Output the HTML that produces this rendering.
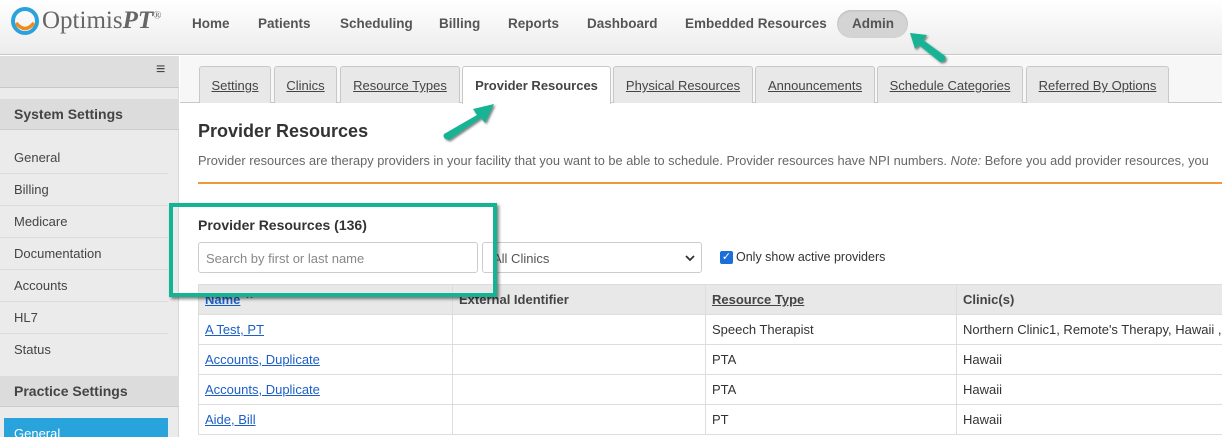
<!DOCTYPE html>
<html><head><meta charset="utf-8"><style>
*{box-sizing:border-box;margin:0;padding:0}
html,body{width:1222px;height:437px;overflow:hidden}
body{font-family:"Liberation Sans",Arial,sans-serif;background:#fff;position:relative;color:#333}
.abs{position:absolute}
.hdr{left:0;top:0;width:1222px;height:55px;background:linear-gradient(#fff,#ececec);border-bottom:1px solid #c8c8c8}
.nav{top:16px;font-size:13.5px;font-weight:bold;color:#555}
.side{left:0;top:56px;width:179px;height:381px;background:#ebebeb;border-right:1px solid #d8d8d8}
.sitem{left:0;width:168px;height:32px;border-bottom:1px solid #dcdcdc;font-size:13px;color:#444;padding:8px 14px}
.shead{left:0;width:179px;height:31px;background:#dcdcdc;font-size:14px;font-weight:bold;color:#444;padding:7px 14px;border-bottom:1px solid #ccc}
.tab{top:66px;height:37px;background:#e8e8e8;border:1px solid #c8c8c8;border-bottom:none;border-radius:3px 3px 0 0;font-size:13px;color:#444;text-decoration:underline;text-align:center;padding-top:11px}
td,th{border:1px solid #ddd;height:30px;font-size:13px;padding:0 6px;text-align:left;white-space:nowrap;overflow:hidden}
th{background:#e8e8e8;color:#444}
a{color:#1a5fc8;text-decoration:underline}
</style></head><body>
<div class="abs hdr"></div>
<svg class="abs" style="left:9px;top:6px" width="34" height="30" viewBox="0 0 34 30"><circle cx="16" cy="15" r="12" fill="none" stroke="#2aa3dc" stroke-width="4"/><path d="M7 17 Q16 28 25 17" fill="none" stroke="#f18a1c" stroke-width="3.5"/></svg>
<div class="abs" style="left:42px;top:7px;font-family:'Liberation Serif',serif;font-size:25px;color:#666">Optimis<i style="font-weight:bold">PT</i><sup style="font-size:11px">®</sup></div>
<div class="abs nav" style="left:192px">Home</div>
<div class="abs nav" style="left:258px">Patients</div>
<div class="abs nav" style="left:340px">Scheduling</div>
<div class="abs nav" style="left:439px">Billing</div>
<div class="abs nav" style="left:508px">Reports</div>
<div class="abs nav" style="left:587px">Dashboard</div>
<div class="abs nav" style="left:685px">Embedded Resources</div>
<div class="abs" style="left:837px;top:10px;width:71px;height:28px;border-radius:14px;background:#d4d4d4;box-shadow:inset 0 1px 2px #bbb"></div>
<div class="abs nav" style="left:852px">Admin</div>
<div class="abs side"></div>
<div class="abs" style="left:0;top:56px;width:179px;height:32px;background:#dedede;border-bottom:1px solid #c8c8c8"></div>
<div class="abs" style="left:156px;top:61px;font-size:16px;color:#444">≡</div>
<div class="abs shead" style="top:99px">System Settings</div>
<div class="abs sitem" style="top:142px">General</div>
<div class="abs sitem" style="top:174px">Billing</div>
<div class="abs sitem" style="top:206px">Medicare</div>
<div class="abs sitem" style="top:238px">Documentation</div>
<div class="abs sitem" style="top:270px">Accounts</div>
<div class="abs sitem" style="top:302px">HL7</div>
<div class="abs sitem" style="top:334px;border:none">Status</div>
<div class="abs shead" style="top:376px">Practice Settings</div>
<div class="abs" style="left:4px;top:418px;width:164px;height:25px;background:#29a3dc;color:#fff;font-size:13px;padding:8px 10px">General</div>
<div class="abs" style="left:180px;top:56px;width:1042px;height:47px;background:#f7f7f7;border-bottom:1px solid #c8c8c8"></div>
<div class="abs tab" style="left:199px;width:72px">Settings</div>
<div class="abs tab" style="left:274px;width:63px">Clinics</div>
<div class="abs tab" style="left:340px;width:120px">Resource Types</div>
<div class="abs tab" style="left:462px;width:149px;background:#fff;height:38px;text-decoration:none;font-weight:bold;color:#444">Provider Resources</div>
<div class="abs tab" style="left:613px;width:140px">Physical Resources</div>
<div class="abs tab" style="left:755px;width:120px">Announcements</div>
<div class="abs tab" style="left:877px;width:146px">Schedule Categories</div>
<div class="abs tab" style="left:1026px;width:143px">Referred By Options</div>
<div class="abs" style="left:198px;top:121px;font-size:18px;font-weight:bold;color:#333">Provider Resources</div>
<div class="abs" style="left:198px;top:153px;font-size:12.8px;color:#666;white-space:nowrap">Provider resources are therapy providers in your facility that you want to be able to schedule. Provider resources have NPI numbers. <i>Note:</i> Before you add provider resources, you</div>
<div class="abs" style="left:198px;top:182px;width:1024px;height:2px;background:#ef9a3a"></div>
<div class="abs" style="left:198px;top:217px;font-size:14px;font-weight:bold;color:#333">Provider Resources (136)</div>
<div class="abs" style="left:198px;top:242px;width:280px;height:31px;border:1px solid #ccc;border-radius:3px;font-size:13px;color:#888;padding:8px 7px">Search by first or last name</div>
<div class="abs" style="left:482px;top:242px;width:220px;height:31px;border:1px solid #ccc;border-radius:3px;font-size:13px;color:#555;padding:8px 10px">All Clinics<svg style="position:absolute;right:6px;top:11px" width="10" height="8"><path d="M1 2 L5 6 L9 2" fill="none" stroke="#333" stroke-width="1.8"/></svg></div>
<div class="abs" style="left:720px;top:251px;width:13px;height:13px;background:#1a6fd8;border-radius:2px;color:#fff;font-size:11px;line-height:13px;text-align:center">✓</div>
<div class="abs" style="left:736px;top:250px;font-size:12.5px;color:#333">Only show active providers</div>
<table class="abs" style="left:198px;top:284px;width:1040px;border-collapse:collapse;table-layout:fixed">
<colgroup><col style="width:254px"><col style="width:253px"><col style="width:251px"><col style="width:282px"></colgroup>
<tr><th><a>Name</a> ⌃</th><th>External Identifier</th><th><u>Resource Type</u></th><th>Clinic(s)</th></tr>
<tr><td><a>A Test, PT</a></td><td></td><td>Speech Therapist</td><td>Northern Clinic1, Remote's Therapy, Hawaii ,</td></tr>
<tr><td><a>Accounts, Duplicate</a></td><td></td><td>PTA</td><td>Hawaii</td></tr>
<tr><td><a>Accounts, Duplicate</a></td><td></td><td>PTA</td><td>Hawaii</td></tr>
<tr><td><a>Aide, Bill</a></td><td></td><td>PT</td><td>Hawaii</td></tr>
</table>
<div class="abs" style="left:169px;top:203px;width:328px;height:94px;border:4px solid #13b394;box-shadow:2px 2px 3px rgba(0,0,0,.5)"></div>
<svg class="abs" style="left:0;top:0" width="1222" height="437">
<defs><filter id="s"><feDropShadow dx="1.5" dy="1.5" stdDeviation="1" flood-opacity=".5"/></filter></defs>
<g fill="#13b394" filter="url(#s)">
<path d="M444 134 L477 115 L473 109 L494 104 L485 123 L481 118 L449 140 Q442 139 444 134 Z"/>
<path d="M945 56 L923 40 L927 35 L910 33 L915 49 L919 45 L940 62 Q947 62 945 56 Z"/>
</g></svg>
</body></html>
